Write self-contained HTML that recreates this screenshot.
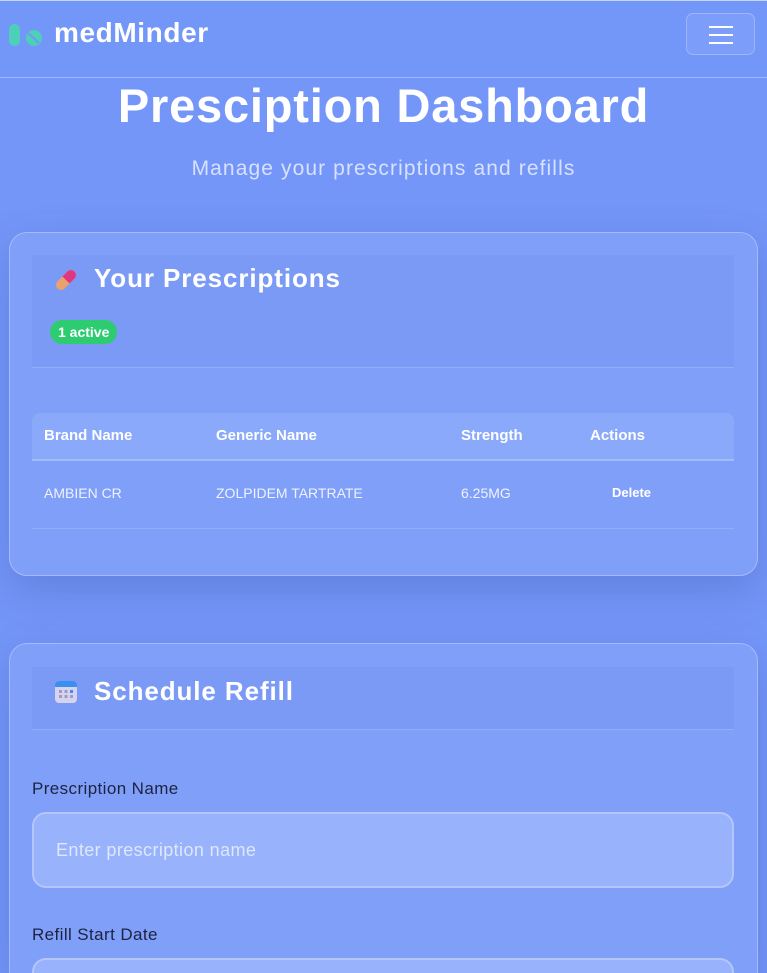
<!DOCTYPE html>
<html style="width:767px;height:973px;overflow:hidden"><head><meta charset="utf-8"><style>
*{box-sizing:border-box;margin:0;padding:0}
body{width:767px;height:973px;overflow:hidden;background:#7496f8;font-family:"Liberation Sans",sans-serif;color:#fff;position:relative}
.nav{position:absolute;left:0;top:0;width:767px;height:78px;background:#7396f9;border-top:1px solid #c8d4f8;border-bottom:1px solid #a3b8fb}
.logo{position:absolute;left:54px;top:16px;font-size:28px;font-weight:bold;letter-spacing:0.6px}
.burger{position:absolute;left:686px;top:12px;width:69px;height:42px;border:1px solid #9fb5fb;border-radius:7px;background:#7d9dfa}
.burger i{position:absolute;left:22px;width:24px;height:2px;background:#fff}
h1{position:absolute;top:78px;width:767px;text-align:center;font-size:47px;font-weight:bold;letter-spacing:0.8px}
.sub{position:absolute;top:157px;width:767px;text-align:center;font-size:21px;color:#d8e1fd;letter-spacing:1.1px}
.card{position:absolute;left:9px;width:749px;border:1px solid #a6bafb;border-radius:18px;background:#809ff9;box-shadow:0 15px 40px rgba(60,80,170,.3)}
.hd{position:absolute;left:22px;width:702px;background:#7b9af5;border-bottom:1px solid #94adf9}
.hd h2{position:absolute;left:62px;font-size:26px;font-weight:bold;letter-spacing:0.9px}
.badge{position:absolute;left:18px;top:65px;background:#2ecc71;border-radius:13px;padding:4px 8px;font-size:14px;font-weight:bold}
.th{position:absolute;left:22px;top:180px;width:702px;height:48px;background:#8ba9fb;border-radius:8px 8px 0 0;border-bottom:2px solid #a4bbfc;font-weight:bold;font-size:15px}
.th span,.tr span{position:absolute;top:14px}
.tr{position:absolute;left:22px;top:228px;width:702px;height:68px;border-bottom:1px solid #92acfa;font-size:14px;color:#eef2ff}
.tr span{top:24px}
label{position:absolute;left:32px;font-size:17px;color:#1d2340;letter-spacing:0.4px}
.inp{position:absolute;left:32px;width:702px;height:76px;border:2px solid #b4c6fc;border-radius:14px;background:#98b2fb;color:#dfe7fd;font-size:18px;padding:26px 22px;letter-spacing:0.4px}
</style></head><body>
<div class="nav">
<svg style="position:absolute;left:8px;top:22px" width="36" height="24" viewBox="0 0 36 24"><rect x="1" y="1" width="11" height="22" rx="5.5" fill="#4ecfb8"/><circle cx="26" cy="15" r="8" fill="#4ecfb8"/><line x1="20" y1="10" x2="31" y2="20" stroke="#7396f9" stroke-width="2"/></svg>
<div class="logo">medMinder</div>
<div class="burger"><i style="top:12px"></i><i style="top:20px"></i><i style="top:28px"></i></div>
</div>
<h1>Presciption Dashboard</h1>
<div class="sub">Manage your prescriptions and refills</div>
<div class="card" style="top:232px;height:344px">
<div class="hd" style="top:22px;height:113px">
<svg style="position:absolute;left:22px;top:12px" width="24" height="26" viewBox="0 0 24 26"><g transform="rotate(45 12 13)"><rect x="7" y="1" width="10" height="24" rx="5" fill="#eba070"/><path d="M7 13V6a5 5 0 0 1 10 0v7z" fill="#e0387f"/></g></svg>
<h2 style="top:8px">Your Prescriptions</h2>
<div class="badge">1 active</div>
</div>
<div class="th"><span style="left:12px">Brand Name</span><span style="left:184px">Generic Name</span><span style="left:429px">Strength</span><span style="left:558px">Actions</span></div>
<div class="tr"><span style="left:12px">AMBIEN CR</span><span style="left:184px">ZOLPIDEM TARTRATE</span><span style="left:429px">6.25MG</span><span style="left:580px;font-weight:bold;font-size:13px;color:#fff">Delete</span></div>
</div>
<div class="card" style="top:643px;height:330px;border-bottom:none;border-radius:18px 18px 0 0">
<div class="hd" style="top:23px;height:63px">
<svg style="position:absolute;left:22px;top:13px" width="24" height="24" viewBox="0 0 24 24"><rect x="1" y="1" width="22" height="22" rx="4" fill="#d6d3ee"/><path d="M1 7V5a4 4 0 0 1 4-4h14a4 4 0 0 1 4 4v2z" fill="#3a8ff0"/><g fill="#9e9bc4"><rect x="5" y="10" width="3" height="3"/><rect x="10.5" y="10" width="3" height="3"/><rect x="5" y="15" width="3" height="3"/><rect x="10.5" y="15" width="3" height="3"/><rect x="16" y="15" width="3" height="3"/></g><rect x="16" y="10" width="3" height="3" fill="#3a8ff0"/></svg>
<h2 style="top:9px">Schedule Refill</h2>
</div>
</div>
<label style="top:779px">Prescription Name</label>
<div class="inp" style="top:812px">Enter prescription name</div>
<label style="top:925px">Refill Start Date</label>
<div class="inp" style="top:958px;height:15px;border-bottom:none;border-radius:14px 14px 0 0"></div>
</body></html>
